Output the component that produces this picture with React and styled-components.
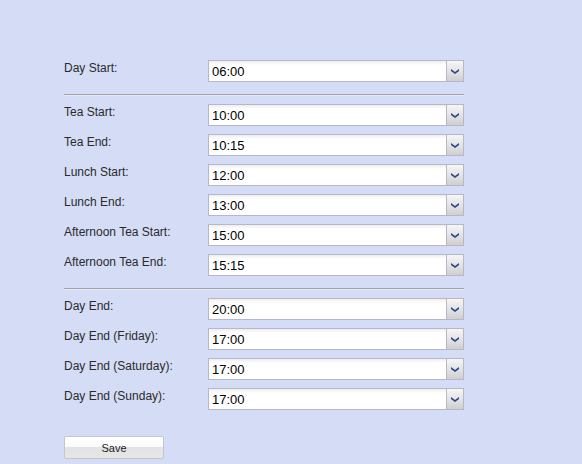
import styled, { createGlobalStyle } from "styled-components";

const GlobalStyle = createGlobalStyle`
	html, body {
		margin: 0;
		padding: 0;
		background: #d5dcf6;
	}
	body {
		font-family: "Liberation Sans", Arial, sans-serif;
		font-size: 12px;
		color: #222;
	}
`;

const Page = styled.div`
	width: 582px;
	height: 464px;
	box-sizing: border-box;
	padding: 60px 0 0 64px;
	background: #d5dcf6;
	overflow: hidden;
`;

const Form = styled.div`
	width: 400px;
	display: flex;
	flex-direction: column;
`;

const Group = styled.div`
	display: flex;
	flex-direction: column;
	gap: 8px;
`;

const Row = styled.div`
	display: flex;
	align-items: flex-start;
	height: 22px;
`;

const Label = styled.div`
	width: 144px;
	padding-top: 1px;
	font-size: 12px;
	line-height: 14px;
	color: #2a2a2a;
`;

const Combo = styled.div`
	flex: 1;
	display: flex;
	height: 22px;
	box-sizing: border-box;
	border: 1px solid #b5b8c8;
	background: linear-gradient(#eeeeee 0, #ffffff 4px, #ffffff 100%);
`;

const Value = styled.div`
	flex: 1;
	padding: 3px 0 0 3px;
	font-size: 13px;
	line-height: 16px;
	color: #000;
`;

const Trigger = styled.div`
	width: 16px;
	display: flex;
	align-items: center;
	justify-content: center;
	border-left: 1px solid #b5b8c8;
	background: linear-gradient(#f6f6f6, #e0e0e0 60%, #cfcfcf);
`;

const Divider = styled.div`
	height: 1px;
	background: #a3a3a3;
	border-bottom: 1px solid #e4e8f8;
	margin: ${(p) => p.$top}px 0 ${(p) => p.$bottom}px;
`;

const SaveButton = styled.button`
	margin-top: 26px;
	width: 100px;
	height: 23px;
	border: 1px solid #c4c6cc;
	border-radius: 2px;
	background: linear-gradient(#ffffff 0, #fafafa 50%, #e3e3e3 50%, #e6e6e6 100%);
	font-family: "Liberation Sans", Arial, sans-serif;
	font-size: 11px;
	line-height: 20px;
	color: #222;
	padding: 0;
	cursor: pointer;
`;

const Arrow = () => (
	<svg width="8" height="5" viewBox="0 0 8 5">
		<path d="M0 0 L4 3 L8 0 L8 2 L4 5 L0 2 Z" fill="#24448c" />
	</svg>
);

const Field = ({ label, value }) => (
	<Row>
		<Label>{label}</Label>
		<Combo>
			<Value>{value}</Value>
			<Trigger>
				<Arrow />
			</Trigger>
		</Combo>
	</Row>
);

const breaks = [
	["Tea Start:", "10:00"],
	["Tea End:", "10:15"],
	["Lunch Start:", "12:00"],
	["Lunch End:", "13:00"],
	["Afternoon Tea Start:", "15:00"],
	["Afternoon Tea End:", "15:15"],
];

const ends = [
	["Day End:", "20:00"],
	["Day End (Friday):", "17:00"],
	["Day End (Saturday):", "17:00"],
	["Day End (Sunday):", "17:00"],
];

const App = () => {
	return (
		<>
			<GlobalStyle />
			<Page>
				<Form>
					<Field label="Day Start:" value="06:00" />
					<Divider $top={12} $bottom={8} />
					<Group>
						{breaks.map(([l, v]) => (
							<Field key={l} label={l} value={v} />
						))}
					</Group>
					<Divider $top={12} $bottom={8} />
					<Group>
						{ends.map(([l, v]) => (
							<Field key={l} label={l} value={v} />
						))}
					</Group>
				</Form>
				<SaveButton>Save</SaveButton>
			</Page>
		</>
	);
};

export default App;
